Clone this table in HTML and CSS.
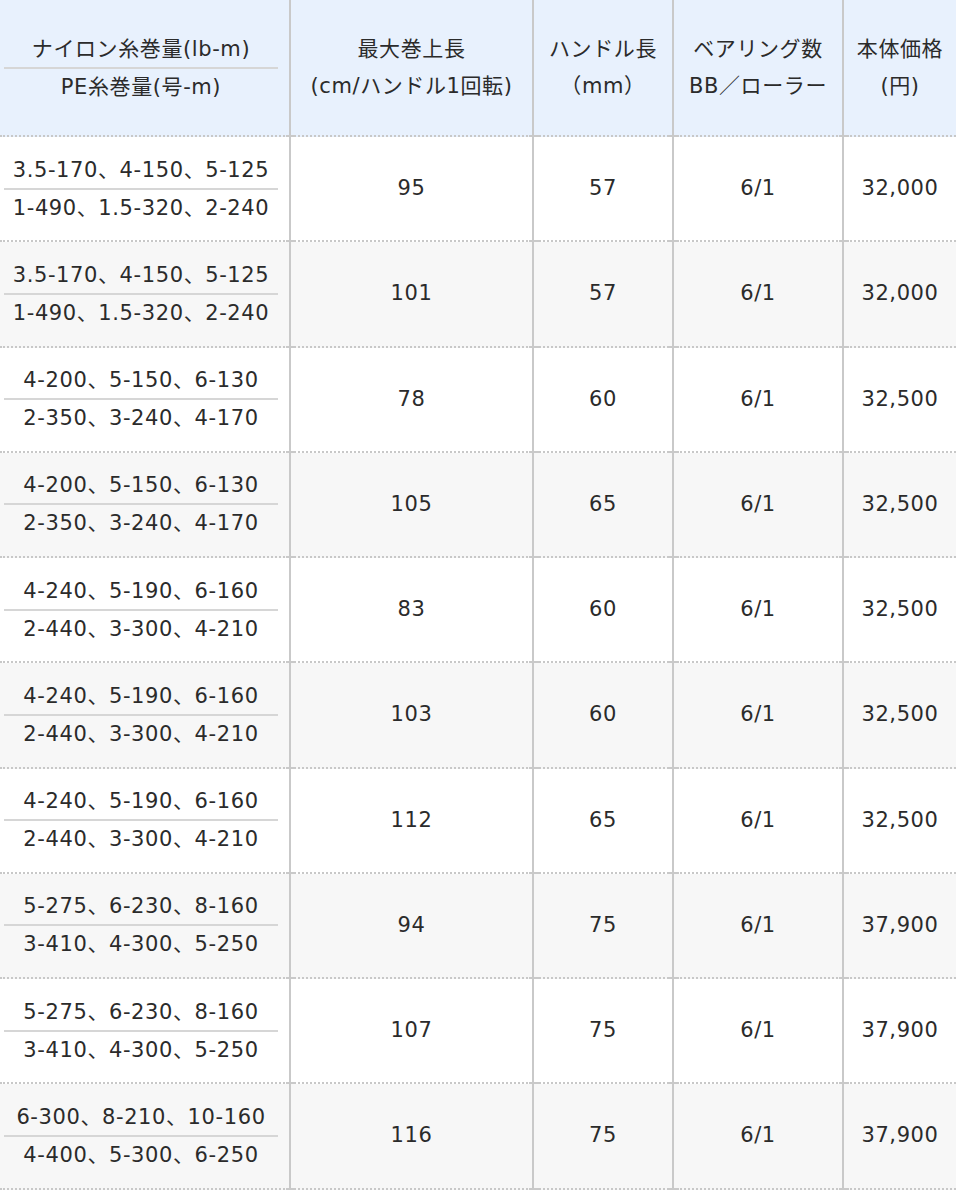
FILE: index.html
```html
<!DOCTYPE html>
<html lang="ja">
<head>
<meta charset="utf-8">
<link rel="stylesheet" href="styles.css">
</head>
<body>
<table class="spec">
  <colgroup>
    <col class="c1"><col class="c2"><col class="c3"><col class="c4"><col class="c5">
  </colgroup>
  <thead>
    <tr>
      <th class="line"><div class="l1">ナイロン糸巻量(lb-m)</div><div class="l2">PE糸巻量(号-m)</div></th>
      <th>最大巻上長<br>(cm/ハンドル1回転)</th>
      <th>ハンドル長<br>（mm）</th>
      <th>ベアリング数<br>BB／ローラー</th>
      <th>本体価格<br>(円)</th>
    </tr>
  </thead>
  <tbody>
    <tr><td class="line"><div class="l1">3.5-170、4-150、5-125</div><div class="l2">1-490、1.5-320、2-240</div></td><td>95</td><td>57</td><td>6/1</td><td>32,000</td></tr>
    <tr><td class="line"><div class="l1">3.5-170、4-150、5-125</div><div class="l2">1-490、1.5-320、2-240</div></td><td>101</td><td>57</td><td>6/1</td><td>32,000</td></tr>
    <tr><td class="line"><div class="l1">4-200、5-150、6-130</div><div class="l2">2-350、3-240、4-170</div></td><td>78</td><td>60</td><td>6/1</td><td>32,500</td></tr>
    <tr><td class="line"><div class="l1">4-200、5-150、6-130</div><div class="l2">2-350、3-240、4-170</div></td><td>105</td><td>65</td><td>6/1</td><td>32,500</td></tr>
    <tr><td class="line"><div class="l1">4-240、5-190、6-160</div><div class="l2">2-440、3-300、4-210</div></td><td>83</td><td>60</td><td>6/1</td><td>32,500</td></tr>
    <tr><td class="line"><div class="l1">4-240、5-190、6-160</div><div class="l2">2-440、3-300、4-210</div></td><td>103</td><td>60</td><td>6/1</td><td>32,500</td></tr>
    <tr><td class="line"><div class="l1">4-240、5-190、6-160</div><div class="l2">2-440、3-300、4-210</div></td><td>112</td><td>65</td><td>6/1</td><td>32,500</td></tr>
    <tr><td class="line"><div class="l1">5-275、6-230、8-160</div><div class="l2">3-410、4-300、5-250</div></td><td>94</td><td>75</td><td>6/1</td><td>37,900</td></tr>
    <tr><td class="line"><div class="l1">5-275、6-230、8-160</div><div class="l2">3-410、4-300、5-250</div></td><td>107</td><td>75</td><td>6/1</td><td>37,900</td></tr>
    <tr><td class="line"><div class="l1">6-300、8-210、10-160</div><div class="l2">4-400、5-300、6-250</div></td><td>116</td><td>75</td><td>6/1</td><td>37,900</td></tr>
  </tbody>
</table>
</body>
</html>
```

FILE: styles.css
```css
html, body {
  margin: 0;
  padding: 0;
  background: #ffffff;
  overflow: hidden;
}

.spec {
  border-collapse: separate;
  border-spacing: 0;
  table-layout: fixed;
  width: 956px;
  font-family: "DejaVu Sans", "Noto Sans CJK JP", sans-serif;
  font-size: 21px;
  letter-spacing: 0.6px;
  color: #2b2b2b;
}

.c1 { width: 289px; }
.c2 { width: 243px; }
.c3 { width: 140px; }
.c4 { width: 170px; }
.c5 { width: 114px; }

.spec th,
.spec td {
  position: relative;
  padding: 0;
  text-align: center;
  vertical-align: middle;
  font-weight: normal;
  border-bottom: 2px dotted #c8c8c8;
  line-height: 37px;
  white-space: nowrap;
}

.spec th + th,
.spec td + td {
  border-left: 2px solid #c9c9c9;
}

.spec th + th::after,
.spec td + td::after {
  content: "";
  position: absolute;
  left: -5px;
  bottom: -2px;
  width: 10px;
  height: 2px;
  background: #c9c9c9;
}

.spec thead th {
  height: 135px;
  background: #e8f1fd;
}

.spec tbody td {
  height: 103.25px;
}

.spec tbody tr:nth-child(even) td {
  background: #f7f7f7;
}

.spec .line {
  padding: 0 11px 0 4px;
}

.l1 {
  line-height: 36px;
  border-bottom: 2px solid #d6d6d6;
}

.l2 {
  line-height: 36px;
}
```
